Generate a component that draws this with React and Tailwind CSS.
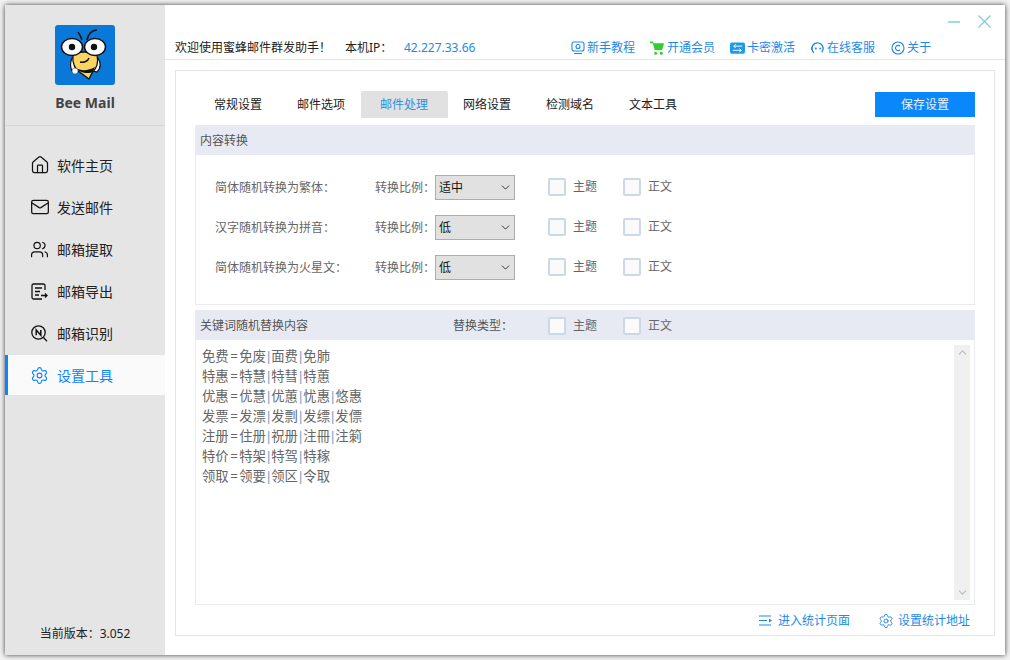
import { House, Mail, Users, Settings, ChevronDown, ChevronUp } from 'lucide-react'

const fontClass = "font-['Noto_Sans','Noto_Sans_CJK_SC',sans-serif]"
const colon = '\uFF1A'

function BeeLogo() {
  return (
    <svg width="60" height="60" viewBox="0 0 60 60" className="rounded-[3px]">
      <rect width="60" height="60" fill="#0a78d8" />
      <path d="M27 15C26 11 24 9 23 7M32 15C33 9 37 5 42 5" fill="none" stroke="#111" strokeWidth="1.6" />
      <path d="M17 33C15 38 15 42 17 46L22 46L20 33Z" fill="#fff" stroke="#111" strokeWidth="1.2" />
      <path d="M43 33C46 38 46 43 42 47L38 46L41 33Z" fill="#fff" stroke="#111" strokeWidth="1.2" />
      <path d="M18 30C20 26 38 26 42 30C44 38 41 44 37 48L34 54L26 48C20 45 17 38 18 30Z" fill="#fcd462" stroke="#111" strokeWidth="1.3" />
      <path d="M21 43C26 46 33 46 40 42L38 47C34 49 28 48 24 46Z" fill="#111" />
      <path d="M25 37C29 38 33 36 34 33" fill="none" stroke="#111" strokeWidth="1.4" />
      <circle cx="20" cy="46" r="3" fill="#fff" stroke="#555" strokeWidth="0.6" />
      <ellipse cx="17" cy="22" rx="10.5" ry="8.5" fill="#fff" stroke="#111" strokeWidth="1.5" />
      <ellipse cx="40" cy="22" rx="10.5" ry="8.5" fill="#fff" stroke="#111" strokeWidth="1.5" />
      <circle cx="17" cy="22" r="3.2" fill="#111" />
      <circle cx="39" cy="22" r="3.2" fill="#111" />
    </svg>
  )
}

function ExportIcon() {
  return (
    <svg width="17" height="17" viewBox="0 0 17 17" fill="none" stroke="currentColor" strokeWidth="1.3">
      <path d="M14 7V2.5A1.5 1.5 0 0 0 12.5 1H2.5A1.5 1.5 0 0 0 1 2.5v12A1.5 1.5 0 0 0 2.5 16H11" />
      <path d="M4 5h7M4 8.5h5M4 12h4M10 12.5h6M14 10.5l2 2-2 2" />
    </svg>
  )
}

function RecogIcon() {
  return (
    <svg width="17" height="17" viewBox="0 0 17 17" fill="none" stroke="currentColor" strokeWidth="1.3">
      <circle cx="7.5" cy="7.5" r="6.7" />
      <path d="M5.2 10.2V5l4.6 5.2V5" strokeWidth="1.5" />
      <path d="M12.5 12.5l3.5 3.7" />
    </svg>
  )
}

function NavItem({ icon, label, active }) {
  return (
    <div className={`flex h-10 items-center border-l-[3px] pl-[23px] text-[14px] ${active ? 'border-[#0a84ff] bg-[#fafafa] text-[#0a84ff]' : 'border-transparent text-[#222]'}`}>
      <span className="flex w-[17px] shrink-0 justify-center">{icon}</span>
      <span className="ml-[9px]">{label}</span>
    </div>
  )
}

function TopLink({ icon, label, width }) {
  return (
    <div className={`flex items-center gap-[2px] text-[12px] text-[#1e8ae6] ${width}`}>
      {icon}
      <span>{label}</span>
    </div>
  )
}

function Check({ label, width }) {
  return (
    <div className={`flex items-center ${width}`}>
      <span className="h-[18px] w-[18px] rounded-[2px] border-2 border-[#cbd8e8] bg-[#fafafa]" />
      <span className="ml-[7px] text-[12px] text-[#666]">{label}</span>
    </div>
  )
}

function ConvertRow({ label, value }) {
  return (
    <div className="flex h-[25px] items-center whitespace-nowrap text-[12px] text-[#666]">
      <span className="w-[160px]">{label}{colon}</span>
      <span className="w-[60px]">转换比例{colon}</span>
      <div className="flex h-[25px] w-[80px] items-center justify-between border border-[#adadad] bg-[#e1e1e1] pl-[3px] pr-[2px] text-[#111]">
        <span>{value}</span>
        <ChevronDown size={13} strokeWidth={1.8} className="text-[#333]" />
      </div>
      <span className="w-[33px]" />
      <div className="flex pb-[2px]">
        <Check label="主题" width="w-[75px]" />
        <Check label="正文" width="w-[60px]" />
      </div>
    </div>
  )
}

function KeywordLine({ text }) {
  const [word, rest] = text.split('=')
  return (
    <div>
      {word}
      <span className="mx-[1.5px]">=</span>
      {rest.split('|').map((part, i) => (
        <span key={part}>
          {i > 0 && <span className="-mx-[1px] text-[#6f9ac4]">|</span>}
          {part}
        </span>
      ))}
    </div>
  )
}

const lines = [
  '免费=免废|面费|免肺',
  '特惠=特慧|特彗|特蕙',
  '优惠=优慧|优蕙|忧惠|悠惠',
  '发票=发漂|发剽|发缥|发僄',
  '注册=住册|祝册|注冊|注箣',
  '特价=特架|特驾|特稼',
  '领取=领要|领区|令取',
]

const tabs = ['常规设置', '邮件选项', '邮件处理', '网络设置', '检测域名', '文本工具']

export default function App() {
  return (
    <div className={`h-[660px] w-[1010px] overflow-hidden bg-[#f2f2f2] p-[5px] ${fontClass}`}>
      <div className="flex h-[650px] w-[1000px] bg-white shadow-[0_0_5px_rgba(0,0,0,0.75)]">
        {/* Sidebar */}
        <aside className="flex w-[160px] shrink-0 flex-col bg-[#e5e5e5]">
          <div className="flex h-[121px] flex-col items-center border-b border-[#d6d6d6] pt-[20px]">
            <BeeLogo />
            <div className="mt-[7px] text-[14px] font-bold leading-[22px] text-[#444]">Bee Mail</div>
          </div>
          <nav className="mt-[19px] flex flex-col gap-[2px]">
            <NavItem icon={<House size={20} strokeWidth={1.5} className="shrink-0 text-[#111]" />} label="软件主页" />
            <NavItem icon={<Mail size={20} strokeWidth={1.5} className="shrink-0 text-[#111]" />} label="发送邮件" />
            <NavItem icon={<Users size={19} strokeWidth={1.5} className="shrink-0 text-[#111]" />} label="邮箱提取" />
            <NavItem icon={<span className="text-[#111]"><ExportIcon /></span>} label="邮箱导出" />
            <NavItem icon={<span className="text-[#111]"><RecogIcon /></span>} label="邮箱识别" />
            <NavItem icon={<Settings size={19} strokeWidth={1.4} className="shrink-0" />} label="设置工具" active />
          </nav>
          <div className="mt-auto pb-[11px] text-center text-[12px] leading-[20px] text-[#222]">当前版本{colon}3.052</div>
        </aside>

        {/* Main */}
        <main className="flex min-w-0 flex-1 flex-col">
          <header className="h-[55px] border-b border-[#e5e5e5]">
            <div className="flex h-[31px] items-end justify-end gap-[18px] pb-[8px] pr-[14px] text-[#7cc8dc]">
              <svg width="12" height="12" viewBox="0 0 12 12" stroke="currentColor" strokeWidth="1.4"><path d="M0 6h12" /></svg>
              <svg width="13" height="13" viewBox="0 0 13 13" stroke="currentColor" strokeWidth="1.1"><path d="M0.5 0.5l12 12M12.5 0.5l-12 12" /></svg>
            </div>
            <div className="flex h-[23px] items-center whitespace-nowrap pl-[10px] text-[12px] text-[#222]">
              <span className="w-[170px]">欢迎使用蜜蜂邮件群发助手{'\uFF01'}</span>
              <span className="w-[59px] text-[#222]">本机IP{colon}</span>
              <span className="w-[167px] text-[#1e8ae6]">42.227.33.66</span>
              <TopLink width="w-[79px]" label="新手教程" icon={
                <svg width="14" height="14" viewBox="0 0 14 14" fill="none" stroke="currentColor" strokeWidth="1.1"><rect x="1" y="1" width="12" height="9" rx="2" /><circle cx="7" cy="5.5" r="2" /><path d="M3 12.5h8" /></svg>
              } />
              <TopLink width="w-[80px]" label="开通会员" icon={
                <svg width="15" height="16" viewBox="0 0 16 16"><path d="M0 1h3l1 2h11l-2 7H5L3 3H0Z" fill="#2fd02f" /><circle cx="6" cy="13.5" r="1.6" fill="#2fd02f" /><circle cx="12" cy="13.5" r="1.6" fill="#2fd02f" /></svg>
              } />
              <TopLink width="w-[81px]" label="卡密激活" icon={
                <svg width="15" height="12" viewBox="0 0 16 12"><rect width="16" height="12" rx="2" fill="#1e9be6" /><path d="M13 4H4M6 2L4 4l2 2M3 8.5h9M10 6.5l2 2-2 2" fill="none" stroke="#fff" strokeWidth="1" /></svg>
              } />
              <TopLink width="w-[80px]" label="在线客服" icon={
                <svg width="14" height="14" viewBox="0 0 15 14" fill="none" stroke="currentColor" strokeWidth="1.5"><path d="M3 12A6 6 0 1 1 11.5 11.5" /><circle cx="5.2" cy="7.5" r="1" fill="currentColor" stroke="none" /><circle cx="9.8" cy="7.5" r="1" fill="currentColor" stroke="none" /><path d="M0.8 6v3" /></svg>
              } />
              <TopLink width="w-[45px]" label="关于" icon={
                <svg width="14" height="14" viewBox="0 0 14 14" fill="none" stroke="currentColor" strokeWidth="1.1"><circle cx="7" cy="7" r="6" /><path d="M9 5.2A2.6 2.6 0 1 0 9 8.8" /></svg>
              } />
            </div>
          </header>

          <div className="mx-[10px] mt-[10px] h-[566px] w-[820px] border border-[#e5e5e5] px-[19px] pt-[20px]">
            {/* Tabs */}
            <div className="flex h-[27px] items-start justify-between">
              <div className="flex pl-[2px]">
                {tabs.map((t, i) => (
                  <div key={t} className={`flex h-[27px] items-center justify-center pr-[1px] text-[12px] ${i === 2 ? '-mx-[2px] w-[87px] rounded-t-[2px] bg-[#e1e1e1] text-[#2a8fe6]' : 'w-[83px] text-[#222]'}`}>{t}</div>
                ))}
              </div>
              <button className="mt-px h-[25px] w-[100px] bg-[#0a88fb] text-[12px] text-[#e8f2fc]">保存设置</button>
            </div>

            {/* Content conversion */}
            <div className="mt-[7px] h-[180px] w-[780px] border-x border-b border-[#e8ebf2]">
              <div className="flex h-[30px] items-center bg-[#e7eaf2] pl-[4px] pt-[2px] text-[12px] text-[#555]">内容转换</div>
              <div className="flex flex-col gap-[15px] pl-[19px] pt-[20px]">
                <ConvertRow label="简体随机转换为繁体" value="适中" />
                <ConvertRow label="汉字随机转换为拼音" value="低" />
                <ConvertRow label="简体随机转换为火星文" value="低" />
              </div>
            </div>

            {/* Keyword replacement */}
            <div className="mt-[5px] w-[780px] border-x border-b border-[#e8ebf2]">
              <div className="flex h-[30px] items-center whitespace-nowrap bg-[#e7eaf2] pl-[4px] pt-[2px] text-[12px] text-[#555]">
                <span className="w-[253px]">关键词随机替换内容</span>
                <span className="w-[95px]">替换类型{colon}</span>
                <Check label="主题" width="w-[75px]" />
                <Check label="正文" width="w-[60px]" />
              </div>
              <div className="flex h-[264px]">
                <div className="flex-1 pl-[6px] pt-[6px] text-[13.33px] leading-[20px] text-[#666]">
                  {lines.map((l) => <KeywordLine key={l} text={l} />)}
                </div>
                <div className="mb-[4px] mr-[4px] mt-[5px] flex w-[16px] flex-col items-center justify-between bg-[#f0f0f0] py-px text-[#bdbdbd]">
                  <ChevronUp size={13} strokeWidth={2.2} />
                  <ChevronDown size={13} strokeWidth={2.2} />
                </div>
              </div>
            </div>

            {/* Footer links */}
            <div className="flex h-[31px] w-[780px] items-center justify-end pr-[5px] text-[12px] text-[#1e8ae6]">
              <svg width="13" height="11" viewBox="0 0 13 11" fill="none" stroke="currentColor"><path d="M0 1h12M0 5.5h8M0 10h12" /><path d="M10 3.5l3 2-3 2Z" fill="currentColor" stroke="none" /></svg>
              <span className="ml-[6px] w-[100px]">进入统计页面</span>
              <Settings size={16} strokeWidth={1.4} />
              <span className="ml-[4px]">设置统计地址</span>
            </div>
          </div>
        </main>
      </div>
    </div>
  )
}
